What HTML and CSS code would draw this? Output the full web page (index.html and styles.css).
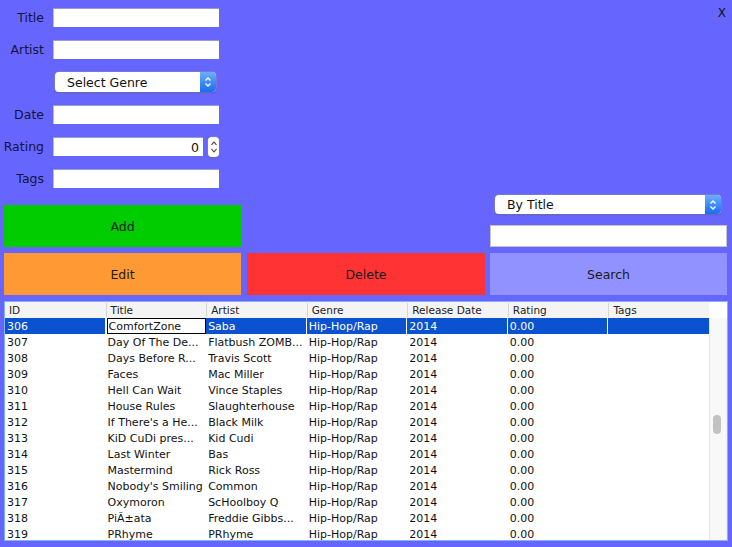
FILE: index.html
```html
<!DOCTYPE html>
<html>
<head>
<meta charset="utf-8">
<link rel="stylesheet" href="styles.css">
</head>
<body>
<div class="app">
  <div class="close">X</div>
  <div class="form">
    <label class="lbl">Title</label><div class="field"></div>
    <label class="lbl">Artist</label><div class="field"></div>
    <span></span>
    <div class="select genre">
      <span class="sel-text">Select Genre</span>
      <span class="sel-btn"><svg width="8" height="12" viewBox="0 0 8 12"><path d="M1.5 4.5 L4 2 L6.5 4.5 M1.5 7.5 L4 10 L6.5 7.5" fill="none" stroke="#fff" stroke-width="1.3"/></svg></span>
    </div>
    <label class="lbl">Date</label><div class="field"></div>
    <label class="lbl">Rating</label>
    <div class="rating-row">
      <div class="field num">0</div>
      <div class="spinner"><svg width="8" height="16" viewBox="0 0 8 16"><path d="M1.5 6 L4 3 L6.5 6 M1.5 10 L4 13 L6.5 10" fill="none" stroke="#333" stroke-width="1.1"/></svg></div>
    </div>
    <label class="lbl">Tags</label><div class="field"></div>
  </div>

  <div class="actions">
    <div class="btn add">Add</div>
    <div></div>
    <div class="search-col">
      <div class="select bytitle">
        <span class="sel-text">By Title</span>
        <span class="sel-btn"><svg width="8" height="12" viewBox="0 0 8 12"><path d="M1.5 4.5 L4 2 L6.5 4.5 M1.5 7.5 L4 10 L6.5 7.5" fill="none" stroke="#fff" stroke-width="1.3"/></svg></span>
      </div>
      <div class="search-field"></div>
    </div>
    <div class="btn edit">Edit</div>
    <div class="btn delete">Delete</div>
    <div class="btn search">Search</div>
  </div>

  <div class="tablebox">
    <div class="grid">
      <div class="hrow">
        <div class="hcell">ID</div><div class="hcell">Title</div><div class="hcell">Artist</div><div class="hcell">Genre</div><div class="hcell">Release Date</div><div class="hcell">Rating</div><div class="hcell">Tags</div>
      </div>
      <div class="row sel"><div class="cell">306</div><div class="cell editing">ComfortZone</div><div class="cell">Saba</div><div class="cell">Hip-Hop/Rap</div><div class="cell">2014</div><div class="cell">0.00</div><div class="cell"></div></div>
      <div class="row"><div class="cell">307</div><div class="cell">Day Of The De...</div><div class="cell">Flatbush ZOMB...</div><div class="cell">Hip-Hop/Rap</div><div class="cell">2014</div><div class="cell">0.00</div><div class="cell"></div></div>
      <div class="row"><div class="cell">308</div><div class="cell">Days Before R...</div><div class="cell">Travis Scott</div><div class="cell">Hip-Hop/Rap</div><div class="cell">2014</div><div class="cell">0.00</div><div class="cell"></div></div>
      <div class="row"><div class="cell">309</div><div class="cell">Faces</div><div class="cell">Mac Miller</div><div class="cell">Hip-Hop/Rap</div><div class="cell">2014</div><div class="cell">0.00</div><div class="cell"></div></div>
      <div class="row"><div class="cell">310</div><div class="cell">Hell Can Wait</div><div class="cell">Vince Staples</div><div class="cell">Hip-Hop/Rap</div><div class="cell">2014</div><div class="cell">0.00</div><div class="cell"></div></div>
      <div class="row"><div class="cell">311</div><div class="cell">House Rules</div><div class="cell">Slaughterhouse</div><div class="cell">Hip-Hop/Rap</div><div class="cell">2014</div><div class="cell">0.00</div><div class="cell"></div></div>
      <div class="row"><div class="cell">312</div><div class="cell">If There's a He...</div><div class="cell">Black Milk</div><div class="cell">Hip-Hop/Rap</div><div class="cell">2014</div><div class="cell">0.00</div><div class="cell"></div></div>
      <div class="row"><div class="cell">313</div><div class="cell">KiD CuDi pres...</div><div class="cell">Kid Cudi</div><div class="cell">Hip-Hop/Rap</div><div class="cell">2014</div><div class="cell">0.00</div><div class="cell"></div></div>
      <div class="row"><div class="cell">314</div><div class="cell">Last Winter</div><div class="cell">Bas</div><div class="cell">Hip-Hop/Rap</div><div class="cell">2014</div><div class="cell">0.00</div><div class="cell"></div></div>
      <div class="row"><div class="cell">315</div><div class="cell">Mastermind</div><div class="cell">Rick Ross</div><div class="cell">Hip-Hop/Rap</div><div class="cell">2014</div><div class="cell">0.00</div><div class="cell"></div></div>
      <div class="row"><div class="cell">316</div><div class="cell">Nobody's Smiling</div><div class="cell">Common</div><div class="cell">Hip-Hop/Rap</div><div class="cell">2014</div><div class="cell">0.00</div><div class="cell"></div></div>
      <div class="row"><div class="cell">317</div><div class="cell">Oxymoron</div><div class="cell">ScHoolboy Q</div><div class="cell">Hip-Hop/Rap</div><div class="cell">2014</div><div class="cell">0.00</div><div class="cell"></div></div>
      <div class="row"><div class="cell">318</div><div class="cell">PiÃ±ata</div><div class="cell">Freddie Gibbs...</div><div class="cell">Hip-Hop/Rap</div><div class="cell">2014</div><div class="cell">0.00</div><div class="cell"></div></div>
      <div class="row"><div class="cell">319</div><div class="cell">PRhyme</div><div class="cell">PRhyme</div><div class="cell">Hip-Hop/Rap</div><div class="cell">2014</div><div class="cell">0.00</div><div class="cell"></div></div>
    </div>
    <div class="scrollcol">
      <div class="scroll-top"></div>
      <div class="track"><div class="thumb"></div></div>
    </div>
  </div>
</div>
</body>
</html>
```

FILE: styles.css
```css
html, body {
  margin: 0;
  padding: 0;
}
body {
  background: #6666ff;
  font-family: "DejaVu Sans", "Lucida Grande", sans-serif;
  color: #111;
  width: 732px;
  height: 547px;
  overflow: hidden;
}
.app {
  position: relative;
  width: 732px;
  height: 547px;
}
.close {
  position: absolute;
  right: 6px;
  top: 6px;
  font-size: 12px;
  color: #111;
}
.form {
  display: grid;
  grid-template-columns: 44px 166px;
  grid-template-rows: 19px 19px 20px 19px 19px 19px;
  column-gap: 9px;
  row-gap: 13px;
  padding-top: 8px;
}
.lbl {
  font-size: 12.5px;
  text-align: right;
  line-height: 20px;
  color: #14143a;
}
.field {
  background: #fff;
  border-top: 1px solid #9a9acc;
  border-left: 1px solid #b8b8e0;
  box-sizing: border-box;
  height: 19px;
}
.field.num {
  width: 151px;
  text-align: right;
  font-size: 12.5px;
  line-height: 19px;
  padding-right: 4px;
  color: #111;
}
.rating-row {
  display: flex;
  align-items: flex-start;
  gap: 5px;
}
.spinner {
  width: 11px;
  height: 20px;
  background: #fff;
  border-radius: 4px;
  box-shadow: 0 0 0 0.5px #8888aa, 0 1px 1px rgba(0,0,0,0.25);
  display: flex;
  align-items: center;
  justify-content: center;
}
.select {
  display: flex;
  background: #fff;
  border-radius: 4px;
  box-shadow: 0 0 0 0.5px #8a8ab0, 0 1px 1px rgba(0,0,40,0.35);
  height: 20px;
  box-sizing: border-box;
  align-items: stretch;
}
.genre {
  margin: 0 3px 0 2px;
}
.sel-text {
  flex: 1;
  font-size: 12.5px;
  line-height: 21px;
  padding-left: 12px;
  color: #111;
}
.sel-btn {
  width: 16px;
  background: linear-gradient(#6aaefc, #1a6cf2);
  border-radius: 0 4px 4px 0;
  display: flex;
  align-items: center;
  justify-content: center;
}
.actions {
  display: grid;
  grid-template-columns: 237px 239px 237px;
  grid-template-rows: 52px 42px;
  column-gap: 5px;
  row-gap: 6px;
  padding: 0 4px;
  margin-top: 7px;
}
.btn {
  display: flex;
  align-items: center;
  justify-content: center;
  font-size: 12.5px;
  color: #1a1a1a;
}
.add {
  background: #00cc00;
  margin-top: 10px;
}
.edit { background: #ff9933; }
.delete { background: #ff3333; margin-left: 1px; }
.search { background: #9191ff; }
.search-col {
  display: flex;
  flex-direction: column;
}
.bytitle {
  margin: 0 6px 0 5px;
  height: 19px;
}
.bytitle .sel-text {
  line-height: 20px;
}
.search-field {
  margin-top: 11px;
  height: 22px;
  background: #fff;
  border: 1px solid #c4c4c4;
  box-sizing: border-box;
}
.tablebox {
  margin: 6px 4px 0 4px;
  height: 240px;
  box-sizing: border-box;
  border: 1px solid #7fb4f6;
  background: #fff;
  display: grid;
  grid-template-columns: 704px 1fr;
  overflow: hidden;
}
.grid {
  overflow: hidden;
}
.hrow, .row {
  display: grid;
  grid-template-columns: repeat(7, 1fr);
  height: 16px;
}
.hrow {
  background: #f4f4f4;
}
.hcell {
  font-size: 10.5px;
  line-height: 16px;
  padding-left: 4px;
  color: #222;
  position: relative;
  white-space: nowrap;
}
.hcell + .hcell {
  border-left: 1px solid #d6d6d6;
  margin-top: 1px;
  line-height: 14px;
  height: 14px;
}
.cell {
  font-size: 11px;
  line-height: 17px;
  padding-left: 2px;
  white-space: nowrap;
  overflow: hidden;
  color: #111;
}
.row .cell:nth-child(1) { padding-left: 2px; }
.row .cell:nth-child(n+2) { padding-left: 2px; }
.row.sel .cell {
  background: #0b52d1;
  color: #fff;
  border-right: 1px solid #fff;
}
.row.sel .cell:last-child {
  border-right: none;
}
.row.sel .cell.editing {
  background: #fff;
  color: #111;
  border: 1px solid #000;
  line-height: 15px;
  padding-left: 1px;
  margin-left: 1px;
}
.scrollcol {
  display: flex;
  flex-direction: column;
}
.scroll-top {
  height: 16px;
  background: #fff;
}
.track {
  flex: 1;
  background: #f8f8f8;
  border-left: 1px solid #e6e6e6;
  border-right: 1px solid #f0f0f0;
}
.thumb {
  width: 8px;
  height: 19px;
  margin: 97px 0 0 3px;
  background: #c2c2c2;
  border-radius: 4px;
}
```
